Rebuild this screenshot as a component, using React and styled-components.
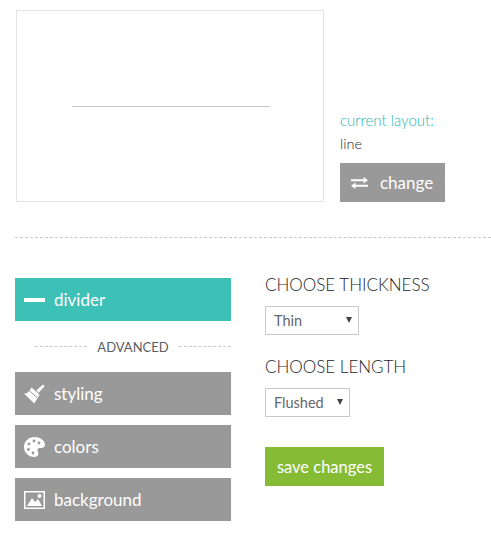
import React from 'react';
import styled, { createGlobalStyle } from 'styled-components';

const GlobalStyle = createGlobalStyle`
  html, body {
    margin: 0;
    padding: 0;
    background: #ffffff;
  }
  body {
    font-family: Lato, "Open Sans", sans-serif;
    color: #4a4f55;
  }
`;

const Page = styled.div`
  width: 491px;
  height: 545px;
  padding: 10px 0 0 15px;
  box-sizing: border-box;
  overflow: hidden;
`;

const TopRow = styled.div`
  display: flex;
  align-items: flex-end;
  gap: 16px;
  padding-left: 1px;
`;

const Preview = styled.div`
  width: 308px;
  height: 192px;
  box-sizing: border-box;
  border: 1px solid #e4e4e4;
  display: flex;
  align-items: center;
  justify-content: center;
  padding-top: 1px;
  padding-left: 2px;
`;

const PreviewLine = styled.div`
  width: 198px;
  height: 1px;
  background: #c6c6c6;
`;

const CurrentLayout = styled.div`
  display: flex;
  flex-direction: column;
  align-items: flex-start;
`;

const CurrentLabel = styled.div`
  font-size: 15px;
  font-weight: 300;
  line-height: 24px;
  color: #2cb5af;
`;

const CurrentValue = styled.div`
  font-size: 14.5px;
  font-weight: 300;
  line-height: 24px;
  margin-bottom: 7px;
  color: #1f2226;
`;

const ChangeButton = styled.button`
  width: 105px;
  height: 39px;
  border: 0;
  padding: 0 0 0 11px;
  background: #999999;
  color: #ffffff;
  font: 17px Lato, sans-serif;
  display: flex;
  align-items: center;
  gap: 12px;
`;

const Rule = styled.div`
  border-top: 1px dashed #c9c9c9;
  margin-top: 35px;
  height: 0;
`;

const Columns = styled.div`
  display: flex;
  gap: 34px;
  margin-top: 40px;
`;

const SideColumn = styled.div`
  width: 216px;
  display: flex;
  flex-direction: column;
`;

const SideButton = styled.button`
  width: 216px;
  height: 43px;
  border: 0;
  padding: 0 0 0 9px;
  background: ${(p) => (p.$active ? '#3dc0b6' : '#999999')};
  color: #ffffff;
  font: 17px Lato, sans-serif;
  display: flex;
  align-items: center;
  margin-bottom: 10px;
  text-align: left;
`;

const SideIcon = styled.span`
  width: 30px;
  display: flex;
  align-items: center;
`;

const MinusBar = styled.span`
  display: block;
  width: 21px;
  height: 4px;
  background: #ffffff;
`;

const AdvancedRow = styled.div`
  display: flex;
  align-items: center;
  gap: 10px;
  padding-left: 20px;
  height: 51px;
  margin-top: -10px;
  font-size: 13px;
  color: #5a5e63;
  &::before, &::after {
    content: '';
    flex: 1;
    border-top: 1px dashed #c9c9c9;
  }
`;

const OptionsColumn = styled.div`
  display: flex;
  flex-direction: column;
  align-items: flex-start;
`;

const OptionTitle = styled.div`
  font-size: 17px;
  font-weight: 300;
  line-height: 20px;
  margin-top: -3px;
  margin-bottom: 11px;
  color: #24272b;
`;

const SelectBox = styled.div`
  position: relative;
  width: ${(p) => p.$width}px;
  height: 29px;
  box-sizing: border-box;
  border: 1px solid #c9c9c9;
  padding-left: 8px;
  font-size: 14.5px;
  line-height: 27px;
  color: #63676c;
  margin-bottom: 25px;
  &::after {
    content: '';
    position: absolute;
    right: 6px;
    top: 10px;
    border-left: 3.5px solid transparent;
    border-right: 3.5px solid transparent;
    border-top: 6px solid #444444;
  }
`;

const SaveButton = styled.button`
  width: 119px;
  height: 39px;
  border: 0;
  padding: 0;
  margin-top: 5px;
  background: #85bb35;
  color: #ffffff;
  font: 16.5px Lato, sans-serif;
`;

const ExchangeIcon = () => (
  <svg width="17" height="12" viewBox="0 0 17 12" fill="#ffffff">
    <path d="M0 2.2h12.5V0L17 3.2l-4.5 3.2V4.2H0z" />
    <path d="M17 7.8H4.5V5.6L0 8.8 4.5 12V9.8H17z" />
  </svg>
);

const BrushIcon = () => (
  <svg width="21" height="20" viewBox="0 0 21 20" fill="#ffffff">
    <path d="M19 .6l1.6 1.6-6 6.6-2.2-2.2z" />
    <path d="M7.6 3.6l8 7.2-5.4 8.6L0 9.6c2.4-.2 4.2-1 5-2.4z" />
    <path d="M5.4 6.6l7.8 7.2" stroke="#999999" strokeWidth="1" fill="none" />
  </svg>
);

const PaletteIcon = () => (
  <svg width="21" height="20" viewBox="0 0 21 20" fill="#ffffff">
    <path d="M10.5 0C16 0 21 3.5 21 8c0 2.5-3 3-5 3-2.500 0-3 2-2 4 1 2 0 5-3.500 5C4.500 20 0 15.500 0 10S4.500 0 10.500 0z" />
    <g fill="#999999">
      <circle cx="10" cy="4" r="1.400" />
      <circle cx="5" cy="7" r="1.400" />
      <circle cx="4.500" cy="12.500" r="1.400" />
      <circle cx="9" cy="16" r="1.400" />
      <circle cx="15" cy="6" r="1.400" />
    </g>
  </svg>
);

const PictureIcon = () => (
  <svg width="21" height="18" viewBox="0 0 21 18">
    <rect x="0.750" y="0.750" width="19.500" height="16.500" fill="none" stroke="#ffffff" strokeWidth="1.500" />
    <path d="M3 15l5-8 3 4 3-3 4 7z" fill="#ffffff" />
    <circle cx="15.500" cy="5" r="2" fill="#ffffff" />
  </svg>
);

export default function App() {
  return (
    <Page>
      <GlobalStyle />
      <TopRow>
        <Preview>
          <PreviewLine />
        </Preview>
        <CurrentLayout>
          <CurrentLabel>current layout:</CurrentLabel>
          <CurrentValue>line</CurrentValue>
          <ChangeButton>
            <ExchangeIcon />
            change
          </ChangeButton>
        </CurrentLayout>
      </TopRow>
      <Rule />
      <Columns>
        <SideColumn>
          <SideButton $active>
            <SideIcon><MinusBar /></SideIcon>
            divider
          </SideButton>
          <AdvancedRow>ADVANCED</AdvancedRow>
          <SideButton>
            <SideIcon><BrushIcon /></SideIcon>
            styling
          </SideButton>
          <SideButton>
            <SideIcon><PaletteIcon /></SideIcon>
            colors
          </SideButton>
          <SideButton>
            <SideIcon><PictureIcon /></SideIcon>
            background
          </SideButton>
        </SideColumn>
        <OptionsColumn>
          <OptionTitle>CHOOSE THICKNESS</OptionTitle>
          <SelectBox $width={94}>Thin</SelectBox>
          <OptionTitle>CHOOSE LENGTH</OptionTitle>
          <SelectBox $width={85}>Flushed</SelectBox>
          <SaveButton>save changes</SaveButton>
        </OptionsColumn>
      </Columns>
    </Page>
  );
}
